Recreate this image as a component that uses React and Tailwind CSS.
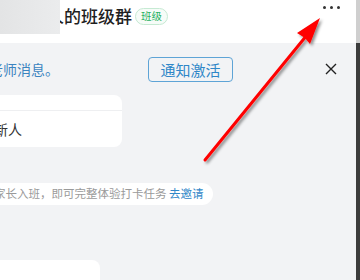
import React from 'react'

const font = { fontFamily: '"Noto Sans CJK SC", "Noto Sans", sans-serif' }

function Arrow() {
  // red annotation arrow drawn over the screenshot
  return (
    <svg className="absolute inset-0 pointer-events-none" width="360" height="280" viewBox="0 0 360 280">
      <defs>
        <filter id="sh" x="-20%" y="-20%" width="140%" height="140%">
          <feDropShadow dx="2" dy="2" stdDeviation="1.6" floodColor="#000" floodOpacity="0.45" />
        </filter>
      </defs>
      <g filter="url(#sh)">
        <line x1="205" y1="160" x2="307" y2="35" stroke="#f00" strokeWidth="3" strokeLinecap="round" />
        <polygon points="320,18 310,44 305,38 297,33" fill="#f00" />
      </g>
    </svg>
  )
}

export default function App() {
  return (
    <div className="relative w-[360px] h-[280px] flex overflow-hidden bg-white" style={font}>
      <div className="w-[356px] flex flex-col bg-[#f2f3f5]">
        <div className="relative h-[43px] bg-white flex items-start shrink-0">
          <div className="h-[32px] flex items-center pl-[13px] gap-[3px]">
            <span className="text-[17px] font-medium text-[#1f1f1f] whitespace-nowrap">某某人的班级群</span>
            <span className="h-[17px] px-[5px] flex items-center rounded-full border border-[#c6ead3] bg-[#f6fcf8] text-[10.5px] text-[#27b062] leading-none">
              班级
            </span>
          </div>
          <div className="ml-auto mr-[16px] mt-[6px] flex gap-[4px]">
            <span className="w-[3px] h-[3px] rounded-full bg-[#333]" />
            <span className="w-[3px] h-[3px] rounded-full bg-[#333]" />
            <span className="w-[3px] h-[3px] rounded-full bg-[#333]" />
          </div>
          <div className="absolute left-0 top-0 w-[60px] h-[34px] bg-gradient-to-r from-[#e3e4e5] to-[#ebeced]" />
        </div>

        <div className="h-[52px] flex items-center shrink-0">
          <span className="ml-[-39px] text-[14px] text-[#3b84c0] whitespace-nowrap">接收老师消息。</span>
          <button className="ml-[89px] w-[85px] h-[25px] rounded-[4px] border border-[#5ea4d6] text-[15px] text-[#2f87c8] leading-none flex items-center justify-center">
            通知激活
          </button>
          <svg className="ml-[92px]" width="12" height="12" viewBox="0 0 12 12">
            <path d="M1 1L11 11M11 1L1 11" stroke="#222" strokeWidth="1.4" />
          </svg>
        </div>

        <div className="w-[122px] h-[52px] bg-white rounded-r-lg shrink-0 flex flex-col">
          <div className="h-[16px] border-b border-[#eeeff1]" />
          <div className="flex-1 flex items-center">
            <span className="ml-[-34px] text-[14px] text-[#333] whitespace-nowrap">邀请新人</span>
          </div>
        </div>

        <div className="mt-[36px] w-[213px] h-[22px] bg-white rounded-r-full shrink-0 flex items-center overflow-hidden">
          <span className="ml-[-29px] text-[11.5px] text-[#9a9a9a] whitespace-nowrap">
            邀请家长入班，即可完整体验打卡任务 <span className="text-[#2f87c8]">去邀请</span>
          </span>
        </div>

        <div className="mt-[55px] w-[100px] h-[20px] bg-white rounded-tr-lg shrink-0" />
      </div>
      <div className="w-[4px] flex flex-col">
        <div className="h-[43px] bg-[#cfcfcf]" />
        <div className="flex-1 bg-[#3c3c3c]" />
      </div>
      <Arrow />
    </div>
  )
}
